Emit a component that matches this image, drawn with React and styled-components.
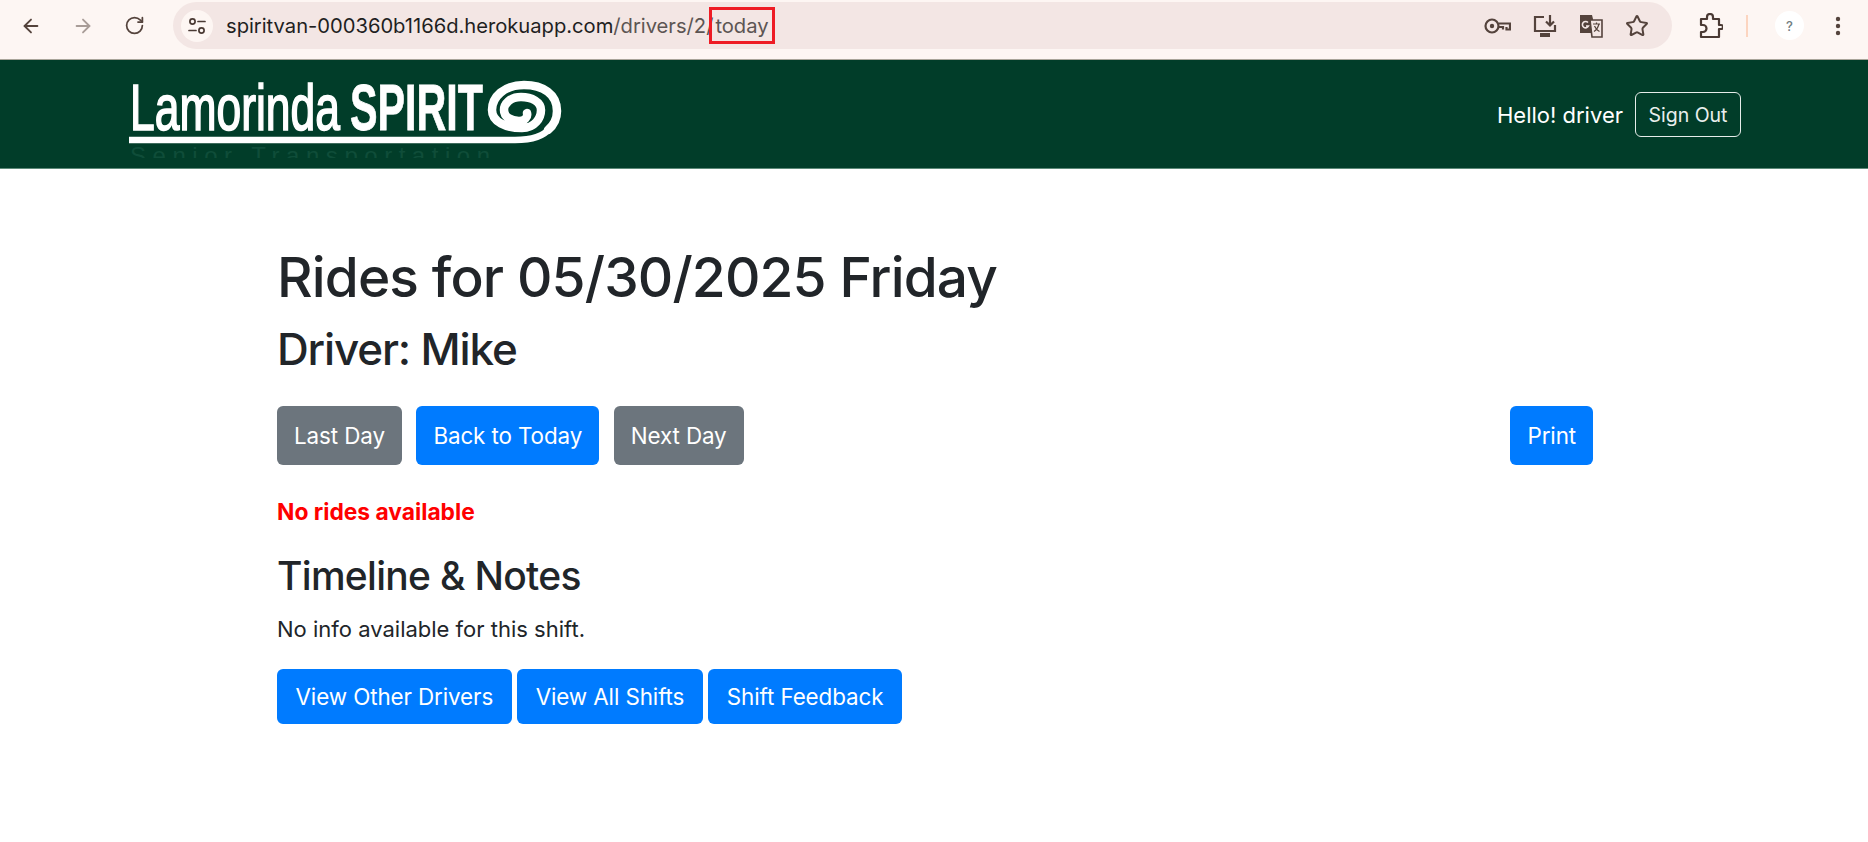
import React from 'react'
import styled, { createGlobalStyle } from 'styled-components'
import { ArrowLeft, ArrowRight, RotateCw, Star } from 'lucide-react'

const GlobalStyle = createGlobalStyle`
  html, body {
    margin: 0;
    background: #fff;
    font-family: Inter, "Liberation Sans", sans-serif;
    color: #212529;
  }
`

const Browser = styled.div`
  height: 59px;
  box-sizing: content-box;
  background: #fdf6f3;
  border-bottom: 1px solid #a9a59a;
  display: flex;
  align-items: center;
  color: #4a3a34;
`

const NavIcons = styled.div`
  width: 173px;
  padding-left: 20px;
  box-sizing: border-box;
  display: flex;
  align-items: center;
  gap: 30px;
  margin-top: -8px;
`

const NavIcon = styled.span`
  display: flex;
  color: ${props => props.$dim ? '#a89c97' : '#54433c'};
`

const Pill = styled.div`
  width: 1499px;
  height: 47px;
  margin-top: -8px;
  border-radius: 24px;
  background: #f3e6e4;
  display: flex;
  align-items: center;
  padding: 0 23px 0 8px;
  box-sizing: border-box;
`

const SiteButton = styled.span`
  width: 32px;
  height: 32px;
  border-radius: 50%;
  background: #fdf6f3;
  display: flex;
  align-items: center;
  justify-content: center;
  margin-right: 13px;
`

const Url = styled.div`
  font-family: Inter, sans-serif;
  font-size: 20.2px;
  letter-spacing: -0.02px;
  color: #1f1f1f;
  white-space: nowrap;
  flex: 1;
`

const UrlPath = styled.span`
  color: #5c5553;
`

const Marked = styled.span`
  color: #5c5553;
  outline: 3px solid #ee1c25;
  outline-offset: 1px;
  padding: 2px 2px 2px 2px;
`

const PillIcons = styled.div`
  display: flex;
  align-items: center;
  gap: 22px;
`

const RightIcons = styled.div`
  margin-top: -8px;
  display: flex;
  align-items: center;
  padding-left: 27px;
`

const Separator = styled.span`
  width: 2px;
  height: 22px;
  background: #fcd5c0;
  margin: 0 27px 0 23px;
`

const Avatar = styled.span`
  width: 29px;
  height: 29px;
  border-radius: 50%;
  background: #fff;
  color: #6f7c80;
  font-size: 13px;
  font-weight: 500;
  display: flex;
  align-items: center;
  justify-content: center;
  margin-right: 31px;
`

const Navbar = styled.nav`
  height: 109px;
  box-sizing: border-box;
  background: #013d29;
  border-bottom: 1px solid #5d8a79;
  display: flex;
  align-items: flex-start;
  justify-content: space-between;
  padding: 15px 127px 0 128px;
`

const Account = styled.div`
  display: flex;
  align-items: center;
  gap: 12px;
  margin-top: 17px;
  color: #fff;
  font-size: 22px;
`

const SignOut = styled.button`
  width: 106px;
  height: 45px;
  border: 1.5px solid #e6ece9;
  border-radius: 6px;
  background: transparent;
  color: #e9efec;
  font-family: inherit;
  font-size: 19.5px;
  padding: 0;
`

const Main = styled.main`
  padding: 74px 275px 0 277px;
`

const Title = styled.h1`
  font-size: 55px;
  font-weight: 500;
  letter-spacing: -0.87px;
  line-height: 68px;
  margin: 0 0 11px;
`

const Driver = styled.h2`
  font-size: 44px;
  font-weight: 500;
  letter-spacing: -1.15px;
  line-height: 54px;
  margin: 0 0 30px;
`

const DayBar = styled.div`
  display: flex;
  align-items: center;
  gap: 14.5px;
`

const PrintSlot = styled.div`
  margin-left: auto;
`

const Button = styled.button`
  height: ${props => props.$tall ? 59 : 55}px;
  padding: 0 ${props => props.$tall ? 17 : 18.5}px;
  border: 0;
  border-radius: 6px;
  background: ${props => props.$gray ? '#6c757d' : '#007bff'};
  color: #fff;
  font-family: inherit;
  font-size: 22.4px;
  letter-spacing: -0.1px;
  white-space: nowrap;
`

const NoRides = styled.p`
  margin: 33px 0 0;
  color: #ff0000;
  font-size: 22.8px;
  font-weight: 700;
  line-height: 28px;
`

const Notes = styled.h3`
  font-size: 39px;
  font-weight: 500;
  letter-spacing: -0.7px;
  line-height: 48px;
  margin: 26px 0 0;
`

const NoInfo = styled.p`
  margin: 13px 0 0;
  font-size: 22px;
  line-height: 32px;
`

const Actions = styled.div`
  display: flex;
  gap: 5.5px;
  margin-top: 24px;
`

const Logo = () => (
  <svg width="440" height="83" viewBox="128 75 440 83">
    <text x="130" y="130" fontFamily="Liberation Sans, sans-serif" fontSize="65" fill="#fff" stroke="#fff" strokeWidth="1.7"
      textLength="210" lengthAdjust="spacingAndGlyphs">Lamorinda</text>
    <text x="350" y="130" fontFamily="Liberation Sans, sans-serif" fontWeight="700" fontSize="65" fill="#fff" stroke="#fff" strokeWidth="0.8"
      textLength="133" lengthAdjust="spacingAndGlyphs">SPIRIT</text>
    <path d="M129 140 H515 C532 140 544 136 550 128" fill="none" stroke="#fff" strokeWidth="6.5" />
    <path d="M548 130 C554 125 557 118 557 111 C557 94 543 85 524 85 C504 85 492 97 492 110 C492 122 506 128 522 128 C535 128 541 118 541 110 C541 102 532 97 521 97 C510 97 504 104 504 110 C504 117 511 121 519 121 C525 121 528 117 527 113"
      fill="none" stroke="#fff" strokeWidth="8.5" strokeLinecap="round" />
    <text x="130" y="164" fontFamily="Liberation Sans, sans-serif" fontSize="24" fill="#0f4d39"
      textLength="360" lengthAdjust="spacing">Senior Transportation</text>
  </svg>
)

const SiteIcon = () => (
  <svg width="20" height="20" viewBox="0 0 20 20" fill="none" stroke="#4a3a34" strokeWidth="1.7" strokeLinecap="round">
    <circle cx="5.5" cy="5.5" r="2.6" />
    <path d="M11 5.5h7" />
    <circle cx="14.5" cy="14.5" r="2.6" />
    <path d="M2 14.5h7" />
  </svg>
)

const KeyIcon = () => (
  <svg width="27" height="16" viewBox="0 0 27 16" fill="none" stroke="#54433c" strokeWidth="2.2">
    <circle cx="8" cy="8" r="6.5" />
    <circle cx="8" cy="8" r="2.2" fill="#54433c" stroke="none" />
    <path d="M14.5 5.5H26V11.5H22.500V9M19 11.500V9H14.500" />
  </svg>
)

const InstallIcon = () => (
  <svg width="24" height="24" viewBox="0 0 24 24" fill="none" stroke="#54433c" strokeWidth="2.2">
    <path d="M11 3H2v14h20v-6" />
    <path d="M17 1v10M13 7.500l4 4 4-4" />
    <path d="M7 19h10v4H7z" fill="#54433c" stroke="none" />
  </svg>
)

const TranslateIcon = () => (
  <svg width="24" height="24" viewBox="0 0 24 24" fill="none">
    <path d="M1 1h12l1 4v14H1z" fill="#54433c" />
    <path d="M11 6h12v17H13z" fill="#f3e6e4" stroke="#54433c" strokeWidth="1.6" />
    <path d="M9 8.500A3.200 3.200 0 1 0 9.500 12H7" stroke="#f3e6e4" strokeWidth="1.6" />
    <path d="M14 10h7M17.500 8.500v1.500M20 10c-1 3.500-2.500 6-5 7.500M15.500 12c1 2.500 3 4.500 5 5.500" stroke="#54433c" strokeWidth="1.200" />
  </svg>
)

const PuzzleIcon = () => (
  <svg width="24" height="26" viewBox="0 0 24 26" fill="none" stroke="#4a3a34" strokeWidth="2.200" strokeLinejoin="round">
    <path d="M2 6h6V4a3 3 0 0 1 6 0v2h6v6h2a1.800 1.800 0 0 1 0 4h-2v8H2v-5h2a3.500 3.500 0 0 0 0-7H2z" />
  </svg>
)

const MoreIcon = () => (
  <svg width="6" height="20" viewBox="0 0 6 20" fill="#54433c">
    <circle cx="3" cy="3" r="2.200" />
    <circle cx="3" cy="10" r="2.200" />
    <circle cx="3" cy="17" r="2.200" />
  </svg>
)

export default () => {
  return <>
    <GlobalStyle />
    <Browser>
      <NavIcons>
        <NavIcon><ArrowLeft size={22} /></NavIcon>
        <NavIcon $dim><ArrowRight size={22} /></NavIcon>
        <NavIcon><RotateCw size={21} /></NavIcon>
      </NavIcons>
      <Pill>
        <SiteButton><SiteIcon /></SiteButton>
        <Url>spiritvan-000360b1166d.herokuapp.com<UrlPath>/drivers/2/</UrlPath><Marked>today</Marked></Url>
        <PillIcons>
          <KeyIcon />
          <InstallIcon />
          <TranslateIcon />
          <Star size={24} color="#54433c" strokeWidth={2} />
        </PillIcons>
      </Pill>
      <RightIcons>
        <PuzzleIcon />
        <Separator />
        <Avatar>?</Avatar>
        <MoreIcon />
      </RightIcons>
    </Browser>
    <Navbar>
      <Logo />
      <Account>
        Hello! driver
        <SignOut>Sign Out</SignOut>
      </Account>
    </Navbar>
    <Main>
      <Title>Rides for 05/30/2025 Friday</Title>
      <Driver>Driver: Mike</Driver>
      <DayBar>
        <Button $tall $gray>Last Day</Button>
        <Button $tall>Back to Today</Button>
        <Button $tall $gray>Next Day</Button>
        <PrintSlot><Button $tall>Print</Button></PrintSlot>
      </DayBar>
      <NoRides>No rides available</NoRides>
      <Notes>Timeline &amp; Notes</Notes>
      <NoInfo>No info available for this shift.</NoInfo>
      <Actions>
        <Button>View Other Drivers</Button>
        <Button>View All Shifts</Button>
        <Button>Shift Feedback</Button>
      </Actions>
    </Main>
  </>
}
